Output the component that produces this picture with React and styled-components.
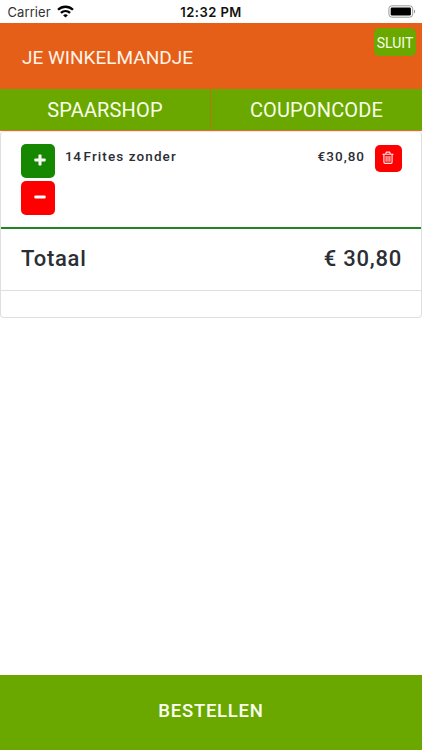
import React from "react";
import styled, { createGlobalStyle } from "styled-components";

const GlobalStyle = createGlobalStyle`
  * { box-sizing: border-box; }
  body { margin: 0; background: #fff; font-family: Roboto, "Liberation Sans", sans-serif; color: #2b2e34; }
  button { border: 0; padding: 0; margin: 0; font: inherit; color: #fff; cursor: pointer; }
`;

const Screen = styled.div`
  width: 100%;
  height: 750px;
  display: flex;
  flex-direction: column;
  overflow: hidden;
`;

const StatusBar = styled.div`
  flex: none;
  height: 23px;
  display: grid;
  grid-template-columns: 1fr auto 1fr;
  align-items: center;
  padding: 0 7px 0 7px;
  font-family: Inter, "Liberation Sans", sans-serif;
  font-size: 13px;
  color: #111;
`;

const Carrier = styled.div`
  display: flex;
  align-items: center;
  gap: 6px;
  padding-left: 0.5px;
  letter-spacing: 0.08px;
  color: #333;
`;

const Clock = styled.div`
  font-weight: 600;
  letter-spacing: 0.45px;
`;

const BatterySlot = styled.div`
  display: flex;
  justify-content: flex-end;
  margin-right: -1px;
`;

const Header = styled.header`
  flex: none;
  height: 66px;
  display: flex;
  justify-content: space-between;
  align-items: flex-start;
  padding: 5px 6px 0 22px;
  background: #e55f18;
  color: #fff4ea;
`;

const Title = styled.h1`
  margin: 18px 0 0;
  font-size: 19px;
  line-height: 24px;
  font-weight: 400;
`;

const CloseButton = styled.button`
  && {
    width: 42px;
    height: 28px;
    padding-top: 1px;
    border-radius: 5px;
    background: #6aa800;
    font-size: 14px;
    color: #f5ffe8;
  }
`;

const Tabs = styled.nav`
  flex: none;
  height: 42px;
  display: grid;
  grid-template-columns: 1fr 1fr;
  border-bottom: 1px solid #d9702b;
`;

const Tab = styled.button`
  && {
    background: #6aa800;
    color: #f8ffea;
    font-size: 20px;
    padding-top: 1px;
    letter-spacing: 0.15px;
    border-right: ${(p) => (p.$divided ? "1px solid #b5751a" : "0")};
  }
`;

const Card = styled.section`
  flex: none;
  height: 187px;
  display: flex;
  flex-direction: column;
  border: 1px solid #dfdfdf;
  border-top-color: #f6e6dc;
  border-radius: 4px;
`;

const ItemRow = styled.div`
  height: 97px;
  display: flex;
  align-items: flex-start;
  padding: 12px 19.5px 0 20px;
  border-bottom: 2px solid #238423;
  font-size: 13.5px;
  line-height: 20px;
  font-weight: 500;
  letter-spacing: 1.1px;
`;

const Stepper = styled.div`
  display: flex;
  flex-direction: column;
  gap: 3px;
  margin-right: 10px;
`;

const StepButton = styled.button`
  && {
    width: 34px;
    height: 34px;
    display: flex;
    align-items: center;
    justify-content: center;
    padding: 0 0 2px 4px;
    border-radius: 5px;
    background: ${(p) => p.$color};
  }
`;

const Quantity = styled.span`
  margin: 2px 2px 0 0;
  letter-spacing: 0.6px;
`;

const ItemName = styled.span`
  flex: 1;
  margin-top: 2px;
`;

const ItemPrice = styled.span`
  margin: 2px 9.5px 0 0;
  letter-spacing: 1px;
`;

const DeleteButton = styled.button`
  && {
    width: 27px;
    height: 27px;
    margin-top: 1px;
    display: flex;
    align-items: center;
    justify-content: center;
    padding: 0 1px 1px 0;
    border-radius: 5px;
    background: #f00;
  }
`;

const TotalRow = styled.div`
  height: 62px;
  display: flex;
  align-items: center;
  justify-content: space-between;
  padding: 0 19px 2px 20px;
  border-bottom: 1px solid #dfdfdf;
  font-size: 22px;
  font-weight: 500;
  letter-spacing: 0.75px;
`;

const OrderButton = styled.button`
  && {
    flex: none;
    height: 75px;
    margin-top: auto;
    padding-bottom: 3px;
    background: #6aa800;
    color: #fbfff2;
    font-size: 18.5px;
    font-weight: 500;
    letter-spacing: 0.75px;
  }
`;

const WifiIcon = () => (
  <svg width="17" height="13" viewBox="0 0 17 13" fill="none" stroke="#000" strokeWidth="2.3">
    <path d="M1 4.8C5.2.7 11.8.7 16 4.8" />
    <path d="M3.9 7.9c2.7-2.5 6.5-2.5 9.2 0" />
    <path d="M8.5 12.6 6.1 10.2c1.4-1.2 3.4-1.2 4.8 0z" fill="#000" stroke="none" />
  </svg>
);

const BatteryIcon = () => (
  <svg width="28" height="13" viewBox="0 0 28 13">
    <rect x="0.9" y="0.8" width="23.8" height="11.4" rx="3" fill="none" stroke="#999" strokeWidth="1" />
    <rect x="2.7" y="2.5" width="20.2" height="8" rx="1.3" fill="#000" />
    <path d="M26 4.5c1.5.5 1.5 3.5 0 4z" fill="#999" />
  </svg>
);

const PlusIcon = () => (
  <svg width="12" height="12" viewBox="0 0 12 12" fill="#fff">
    <rect x="0.4" y="4.5" width="11.2" height="3" rx="0.8" />
    <rect x="4.5" y="0.4" width="3" height="11.2" rx="0.8" />
  </svg>
);

const MinusIcon = () => (
  <svg width="12" height="12" viewBox="0 0 12 12">
    <rect x="0.4" y="4.5" width="11.2" height="3" rx="0.8" fill="#fff" />
  </svg>
);

const TrashIcon = () => (
  <svg width="12" height="14" viewBox="0 0 12 14" fill="none" stroke="#ffe6e6" strokeWidth="1.15" strokeLinecap="round" strokeLinejoin="round">
    <path d="M.9 3.2h10.2M3.7 3 4.3 1.1h3.4l.6 1.9M1.9 3.4V11c0 .8.5 1.4 1.2 1.4h5.8c.7 0 1.2-.6 1.2-1.4V3.4" />
    <path d="M4.1 5.4v4.9M6 5.4v4.9M7.9 5.4v4.9" strokeWidth="1" />
  </svg>
);

export default function App() {
  return (
    <Screen>
      <GlobalStyle />
      <StatusBar>
        <Carrier>Carrier <WifiIcon /></Carrier>
        <Clock>12:32 PM</Clock>
        <BatterySlot><BatteryIcon /></BatterySlot>
      </StatusBar>
      <Header>
        <Title>JE WINKELMANDJE</Title>
        <CloseButton>SLUIT</CloseButton>
      </Header>
      <Tabs>
        <Tab $divided>SPAARSHOP</Tab>
        <Tab>COUPONCODE</Tab>
      </Tabs>
      <Card>
        <ItemRow>
          <Stepper>
            <StepButton $color="#168800" aria-label="Meer"><PlusIcon /></StepButton>
            <StepButton $color="#f00" aria-label="Minder"><MinusIcon /></StepButton>
          </Stepper>
          <Quantity>14</Quantity>
          <ItemName>Frites zonder</ItemName>
          <ItemPrice>€30,80</ItemPrice>
          <DeleteButton aria-label="Verwijderen"><TrashIcon /></DeleteButton>
        </ItemRow>
        <TotalRow>
          <span>Totaal</span>
          <span>€ 30,80</span>
        </TotalRow>
      </Card>
      <OrderButton>BESTELLEN</OrderButton>
    </Screen>
  );
}
